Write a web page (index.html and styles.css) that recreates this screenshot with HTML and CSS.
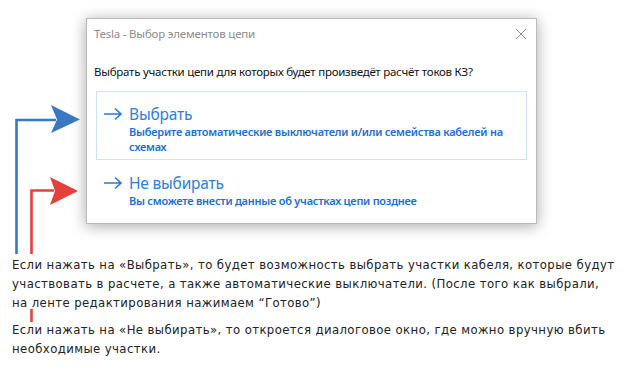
FILE: index.html
```html
<!DOCTYPE html>
<html lang="ru">

<head>
    <meta charset="UTF-8">
    <title>Tesla - Выбор элементов цепи</title>
    <link rel="stylesheet" href="styles.css">
</head>

<body>
    <div class="page">
        <!-- стрелки-указатели поверх картинки -->
        <svg class="pointers" width="624" height="366" viewBox="0 0 624 366">
            <path d="M16.5 254 V120 H56" fill="none" stroke="#3b78c4" stroke-width="2.6" />
            <polygon points="51,105 80,119.5 51,133 57,119.5" fill="#3b78c4" />
            <path d="M31.5 254 V190.5 H54" fill="none" stroke="#e5403a" stroke-width="2.6" />
            <polygon points="50,177 78,191 50,205 55,191" fill="#e5403a" />
            <path d="M31.5 309 V322" fill="none" stroke="#e5403a" stroke-width="2.6" />
        </svg>

        <div class="dialog">
            <div class="titlebar">
                <span class="title">Tesla - Выбор элементов цепи</span>
                <svg class="close" width="12" height="12" viewBox="0 0 12 12">
                    <path d="M1 1 L11 11 M11 1 L1 11" stroke="#8a8a8a" stroke-width="1" fill="none" />
                </svg>
            </div>
            <div class="question">Выбрать участки цепи для которых будет произведёт расчёт токов КЗ?</div>

            <div class="option option-active">
                <svg class="arrow" width="20" height="14" viewBox="0 0 20 14">
                    <path d="M1 7 H18 M12 1.5 L18 7 L12 12.5" stroke="#2479d6" stroke-width="1.6" fill="none" />
                </svg>
                <div class="option-text">
                    <div class="option-title">Выбрать</div>
                    <div class="option-note">Выберите автоматические выключатели и/или семейства кабелей на схемах</div>
                </div>
            </div>

            <div class="option option-plain">
                <svg class="arrow" width="20" height="14" viewBox="0 0 20 14">
                    <path d="M1 7 H18 M12 1.5 L18 7 L12 12.5" stroke="#2479d6" stroke-width="1.6" fill="none" />
                </svg>
                <div class="option-text">
                    <div class="option-title">Не выбирать</div>
                    <div class="option-note">Вы сможете внести данные об участках цепи позднее</div>
                </div>
            </div>
        </div>

        <div class="notes">
            <p>Если нажать на «Выбрать», то будет возможность выбрать участки кабеля, которые будут участвовать в расчете, а также автоматические выключатели. (После того как выбрали, на ленте редактирования нажимаем “Готово”)</p>
            <p>Если нажать на «Не выбирать», то откроется диалоговое окно, где можно вручную вбить необходимые участки.</p>
        </div>
    </div>
</body>

</html>
```

FILE: styles.css
```css
body {
    margin: 0;
    padding: 0;
    background-color: #fff;
}

.page {
    position: relative;
    width: 624px;
    height: 366px;
    overflow: hidden;
    padding-top: 18px;
    box-sizing: border-box;
}

.pointers {
    position: absolute;
    left: 0;
    top: 0;
}

.dialog {
    margin-left: 86px;
    width: 451px;
    height: 206px;
    box-sizing: border-box;
    border: 1px solid #b9b9b9;
    background-color: #fff;
    box-shadow: 0 2px 14px rgba(0, 0, 0, 0.35);
    font-family: "Noto Sans", sans-serif;
}

.titlebar {
    display: flex;
    align-items: center;
    justify-content: space-between;
    height: 29px;
    padding: 0 9px 0 7px;
}

.title {
    font-size: 11.5px;
    color: #8c8c8c;
    letter-spacing: -0.2px;
}

.question {
    margin-top: 16px;
    padding-left: 7px;
    font-size: 11.5px;
    color: #111;
    letter-spacing: -0.25px;
}

.option {
    display: flex;
    gap: 6px;
    margin: 0 9px;
    padding: 12px 8px 8px 6px;
    border: 1px solid transparent;
}

.option-active {
    margin-top: 12px;
    border-color: #cfe2f6;
    height: 69px;
    box-sizing: border-box;
}

.arrow {
    flex: none;
    margin-top: 3px;
}

.option-title {
    font-size: 15.5px;
    line-height: 20px;
    color: #2a7fd9;
    letter-spacing: -0.2px;
}

.option-note {
    font-size: 11px;
    line-height: 15px;
    color: #1a6ed1;
    font-weight: 600;
    letter-spacing: -0.25px;
}

.notes {
    margin-top: 31px;
    padding: 0 8px 0 12px;
    font-family: "DejaVu Sans Condensed", "DejaVu Sans", sans-serif;
    font-size: 13px;
    line-height: 19px;
    letter-spacing: 0.4px;
    color: #222;
}

.notes p {
    margin: 0 0 8px 0;
}
```
